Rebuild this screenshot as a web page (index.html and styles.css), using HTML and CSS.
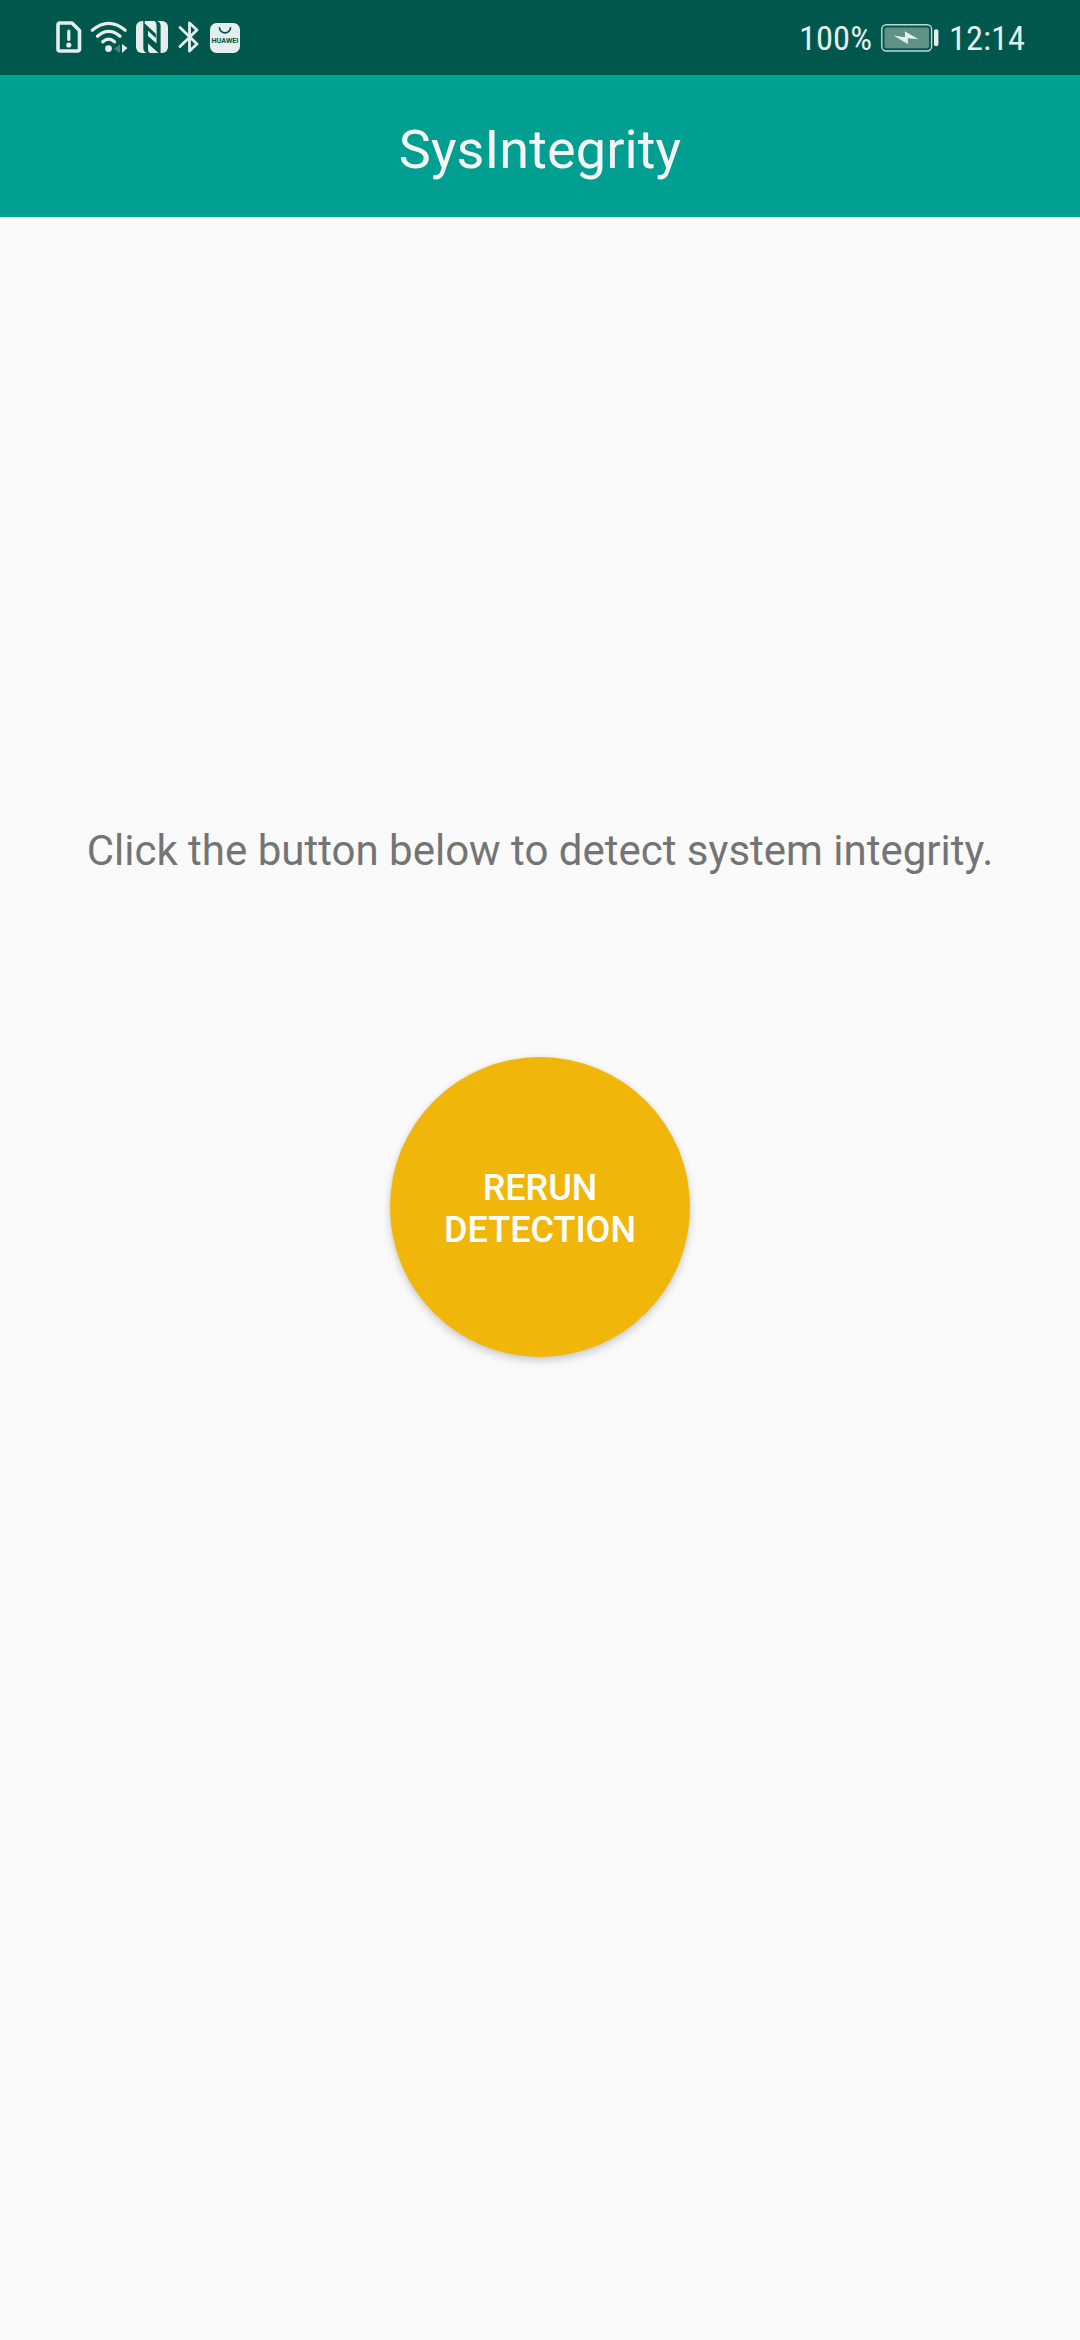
FILE: index.html
```html
<!DOCTYPE html>
<html lang="en">
<head>
<meta charset="utf-8">
<title>SysIntegrity</title>
<link rel="stylesheet" href="styles.css">
</head>
<body>
<header class="status">
  <div class="status-icons">
    <svg class="sim" width="26" height="32" viewBox="0 0 26 32" fill="none" stroke="currentColor">
      <path d="M4 2H16L23.5 9.5V28a2 2 0 0 1-2 2H4a2 2 0 0 1-2-2V4a2 2 0 0 1 2-2Z" stroke-width="3.6" stroke-linejoin="round"/>
      <path d="M12.8 10v8.5" stroke-width="3.2" stroke-linecap="round"/>
      <circle cx="12.8" cy="24" r="2.6" fill="currentColor" stroke="none"/>
    </svg>
    <svg class="wifi" width="38" height="32" viewBox="0 0 38 32" fill="none" stroke="currentColor">
      <path d="M2.3 9.3Q18.7-4.5 35.2 9.3M7.5 15.2Q18.7 5.5 30 15.2M12.8 20.8Q18.7 15.5 24.5 20.8" stroke-width="3.3" stroke-linecap="round"/>
      <circle cx="18.5" cy="27.6" r="3.4" fill="currentColor" stroke="none"/>
      <path d="M30 23v9l-6-4Z" fill="currentColor" stroke="none" opacity=".3"/>
      <path d="M32 23l5.5 4-5.5 5Z" fill="currentColor" stroke="none"/>
    </svg>
    <svg class="nfc" width="32" height="32" viewBox="0 0 32 32">
      <rect width="32" height="32" rx="6" fill="currentColor"/>
      <path d="M7.3 0H9L19.8 9.5V17L12 9.8V28Q12 31 14 32H11Q7.3 31 7.3 27Z" fill="#00574b"/>
      <path d="M24.6 32H22.5L12 22.5V15L20.5 22.5V4Q20.5 1 18.5 0H21Q24.6 1 24.6 5Z" fill="#00574b"/>
      <path d="M9 0H13.5L20.3 6.5V13.2L8.5 2.2Z" fill="currentColor"/>
    </svg>
    <svg class="bt" width="22" height="32" viewBox="0 0 22 32" fill="none" stroke="currentColor" stroke-width="2.8" stroke-linecap="round" stroke-linejoin="round">
      <path d="M2 6.5L19 23L11.5 30V2L19 9L2 25.5"/>
    </svg>
    <svg class="store" width="30" height="30" viewBox="0 0 30 30">
      <rect width="30" height="30" rx="6.5" fill="currentColor"/>
      <path d="M9.5 4.8a5.5 5 0 0 0 11 0" fill="none" stroke="#00574b" stroke-width="1.7" stroke-linecap="round"/>
      <text x="1.5" y="20" textLength="27" lengthAdjust="spacingAndGlyphs" class="store-name">HUAWEI</text>
    </svg>
  </div>
  <div class="status-info">
    <svg width="80" height="44" viewBox="0 0 80 44"><text class="status-text" x="3" y="30.2" textLength="73" lengthAdjust="spacingAndGlyphs">100%</text></svg>
    <svg class="battery" width="58" height="28" viewBox="0 0 58 28">
      <rect x=".8" y=".8" width="49.8" height="26.2" rx="4.5" fill="none" stroke="currentColor" stroke-width="1.4" opacity=".85"/>
      <rect x="3.5" y="3.5" width="44.5" height="20.8" rx="2" fill="#609186"/>
      <path d="M12.5 11.5L24 13.2 23.8 7.2 37.5 15.2 27 14.2 26.8 20Z" fill="currentColor"/>
      <rect x="53" y="5.2" width="4.4" height="17" rx="2" fill="currentColor"/>
    </svg>
    <svg class="clock" width="82" height="44" viewBox="0 0 82 44"><text class="status-text" x="3" y="30.2" textLength="76" lengthAdjust="spacingAndGlyphs">12:14</text></svg>
  </div>
</header>
<div class="appbar"><h1 class="title">SysIntegrity</h1></div>
<main class="content">
  <p class="hint">Click the button below to detect system integrity.</p>
  <button class="detect">RERUN<br>DETECTION</button>
</main>
</body>
</html>
```

FILE: styles.css
```css
* { box-sizing: border-box; }
body {
  margin: 0;
  min-height: 2340px;
  background: #fafafa;
  font-family: Roboto, sans-serif;
}
svg { display: block; flex: none; overflow: visible; }
.nfc { overflow: hidden; }
.status {
  display: flex;
  justify-content: space-between;
  height: 75px;
  padding: 0 52px 0 56px;
  background: #00574b;
  color: #e5eeed;
}
.status-icons, .status-info { display: flex; align-items: flex-start; padding-top: 20px; }
.status-icons { padding-top: 21px; }
.wifi { margin-left: 8px; }
.nfc { margin-left: 8px; }
.bt { margin-left: 10px; }
.store { margin: 2px 0 0 10px; }
.store-name { font: 700 7px Roboto, sans-serif; fill: #00574b; }
.status-text { font: 400 34px "Roboto Condensed", Roboto, sans-serif; fill: currentColor; }
.battery { margin: 4px 0 0 5px; }
.clock { margin-left: 7px; }
.appbar {
  display: flex;
  align-items: center;
  justify-content: center;
  height: 142px;
  padding-top: 7px;
  background: #009f92;
  color: #f5f5f5;
  box-shadow: 0 2px 0 #f1f1f1;
}
.title { margin: 0; font-size: 54px; font-weight: 400; letter-spacing: .1px; }
.content { display: flex; flex-direction: column; align-items: center; padding-top: 609px; }
.hint { margin: 0; font-size: 42px; line-height: 49px; color: #747474; white-space: nowrap; }
.detect {
  width: 300px;
  height: 300px;
  margin-top: 182px;
  padding: 3px 0 0;
  border: 0;
  border-radius: 50%;
  background: #f0b70a;
  color: #fff;
  font: 500 36px/42px Roboto, sans-serif;
  box-shadow: 0 4px 8px rgba(0, 0, 0, .18), 0 0 4px rgba(0, 0, 0, .06);
}
```
